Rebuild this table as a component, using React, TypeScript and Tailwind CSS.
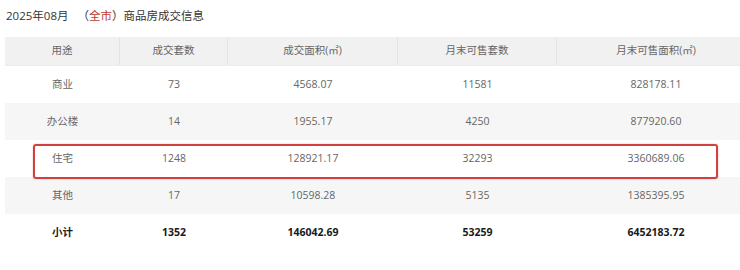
import React from 'react';

const columns = ['用途', '成交套数', '成交面积(㎡)', '月末可售套数', '月末可售面积(㎡)'];
const widths = ['w-[115px]', 'w-[108px]', 'w-[170px]', 'w-[159px]', 'w-[198px]'];

const rows = [
  ['商业', '73', '4568.07', '11581', '828178.11'],
  ['办公楼', '14', '1955.17', '4250', '877920.60'],
  ['住宅', '1248', '128921.17', '32293', '3360689.06'],
  ['其他', '17', '10598.28', '5135', '1385395.95'],
];

const total = ['小计', '1352', '146042.69', '53259', '6452183.72'];

export default function App() {
  return (
    <div
      className="w-[740px] h-[270px] overflow-hidden bg-white text-[#666]"
      style={{ fontFamily: '"Open Sans", "Noto Sans CJK SC", sans-serif' }}
    >
      <div className="mt-[6px] ml-[6px] h-[20px] leading-[20px] text-[11.5px] text-[#333] whitespace-pre">
        2025年08月{'   '}（<span className="text-[#c0392b]">全市</span>）商品房成交信息
      </div>

      <div className="relative mt-[11px] ml-[5px] w-[750px] text-[10.5px]">
        <div className="flex h-[29px] bg-[#f1f1f1] border-b border-[#ebebeb]">
          {columns.map((c, i) => (
            <div
              key={c}
              className={`${widths[i]} flex items-center justify-center ${i < 4 ? 'border-r border-[#e4e4e4]' : ''}`}
            >
              {c}
            </div>
          ))}
        </div>

        {rows.map((r, ri) => (
          <div key={r[0]} className={`flex h-[37px] ${ri % 2 === 1 ? 'bg-[#f6f6f6]' : 'bg-white'}`}>
            {r.map((v, i) => (
              <div key={i} className={`${widths[i]} flex items-center justify-center`}>
                {v}
              </div>
            ))}
          </div>
        ))}

        <div className="flex h-[37px] bg-white font-bold text-[#1a1a1a]">
          {total.map((v, i) => (
            <div key={i} className={`${widths[i]} flex items-center justify-center`}>
              {v}
            </div>
          ))}
        </div>

        {/* highlight on 住宅 row */}
        <div className="absolute left-[28px] top-[107px] w-[685px] h-[35px] border-2 border-[#d0403c] rounded-[3px] shadow-[0_0_2px_rgba(208,64,60,0.4)] pointer-events-none" />
      </div>
    </div>
  );
}
